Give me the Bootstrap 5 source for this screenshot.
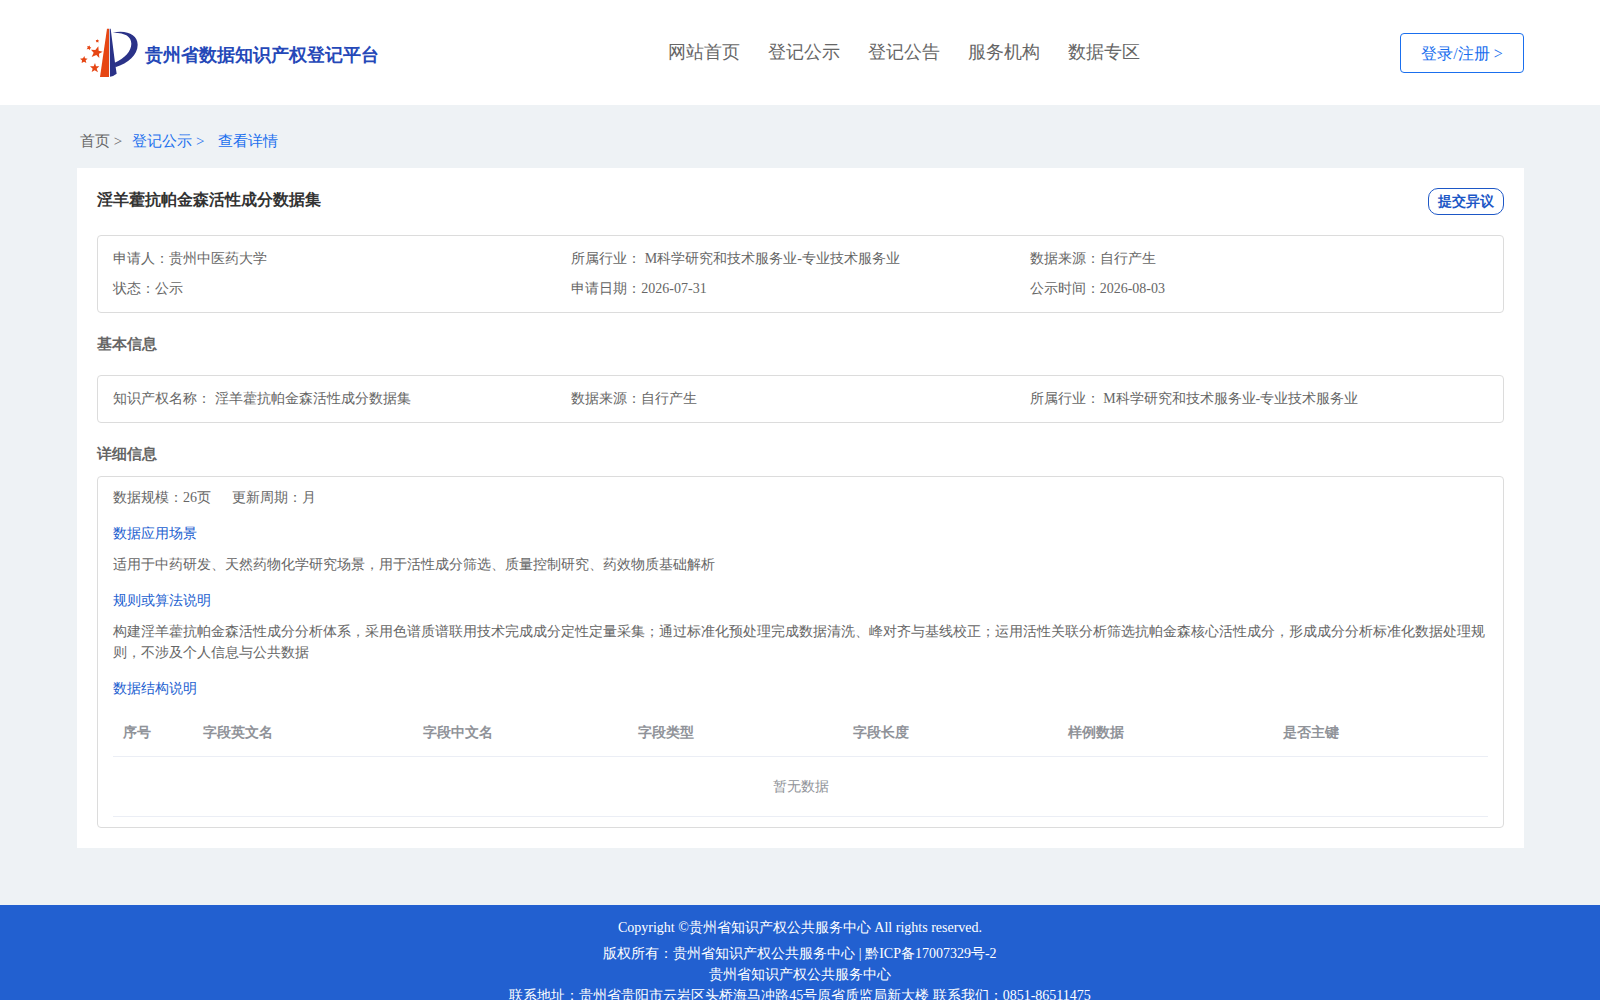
<!DOCTYPE html>
<html lang="en">
<head>
<meta charset="utf-8">
<meta name="viewport" content="width=device-width, initial-scale=1">
<title>贵州省数据知识产权登记平台</title>
<link href="https://cdn.jsdelivr.net/npm/bootstrap@5.3.0/dist/css/bootstrap.min.css" rel="stylesheet">
<style>
  body { font-family: "Liberation Serif", serif; font-size: 14px; line-height: 21px; color: #666; background: #eef2f5; }
  a { text-decoration: none; }
  .page-gutter { padding-left: 77px; padding-right: 76px; }
  .site-header { height: 105px; background: #fff; }
  .site-brand { width: 331px; color: #2548b8; font-size: 18px; font-weight: 700; gap: 7px; padding-left: 3px; }
  .brand-name { padding-top: 5px; }
  .site-nav { gap: 28px; font-size: 18px; padding-bottom: 2px; }
  .site-nav .nav-link { padding: 0; color: #666; line-height: 26px; }
  .login-btn { --bs-btn-color: #1a6fee; --bs-btn-border-color: #1a6fee; --bs-btn-border-radius: 4px; --bs-btn-font-size: 16px; --bs-btn-line-height: 24px; min-width: 124px; padding: 8px 20px 6px; font-family: inherit; }
  .crumbs { font-size: 15px; padding: 25px 3px 16px; line-height: 22px; }
  .crumbs a { color: #666; margin-right: 10px; }
  .crumbs a + a { margin-right: 14px; }
  .crumbs a.crumb-blue, .crumbs .crumb-blue { color: #1a6fee; }
  .detail-panel { background: #fff; padding: 20px; }
  .panel-title { font-size: 16px; line-height: 24px; font-weight: 700; color: #333; margin: 0; }
  .objection-btn { --bs-btn-color: #1d57c6; --bs-btn-border-color: #1d57c6; --bs-btn-border-radius: 10px; --bs-btn-padding-x: 9px; --bs-btn-padding-y: 2px; --bs-btn-font-size: 14px; --bs-btn-line-height: 21px; --bs-btn-font-weight: 700; font-family: inherit; }
  .section-title { font-size: 15px; line-height: 22px; font-weight: 700; color: #666; margin: 0; }
  .detail-title { padding: 20px 0 11px; }
  .info-box { border: 1px solid #dcdcdc; border-radius: 4px; padding: 8px 15px; }
  .info-box .row { --bs-gutter-x: 0; line-height: 30px; }
  .detail-box { padding: 10px 15px; }
  .scale-row { gap: 21px; }
  .sub-title { font-size: 14px; line-height: 21px; color: #2260d0; margin: 15px 0 10px; font-weight: 400; }
  .field-table { --bs-table-color: #909399; --bs-table-bg: transparent; --bs-table-border-color: #ebeef5; --bs-border-color: #ebeef5; color: #909399; table-layout: fixed; margin: 0; border-color: #ebeef5; }
  .field-table th { padding: 13px 10px; font-weight: 700; }
  .field-table td { padding: 19px 10px; }
  .col-index { width: 80px; }
  .col-name { width: 220px; }
  .site-footer { background: #2260d0; color: #fff; margin-top: 57px; padding: 12px 0 20px; }
  .site-footer a { color: #fff; }
  .copyright-line { margin-bottom: 5px; }
</style>
<script src="https://cdn.jsdelivr.net/npm/bootstrap@5.3.0/dist/js/bootstrap.bundle.min.js"></script>
</head>
<body>
<header class="site-header page-gutter d-flex align-items-center justify-content-between">
  <a href="#" class="site-brand d-flex align-items-center">
    <svg width="58" height="50" viewBox="60 55 174 150" aria-hidden="true">
      <path fill="#e64614" d="M141 57h6v145h-27z"/>
      <path fill="#2a3288" d="M149 57h3l13 102 5 33q-10 8-20 9z"/>
      <path fill="#2a3288" d="M158 69C200 60 233 75 233 105c0 30-28 55-67 68l-2-14c30-14 50-34 50-57 0-22-20-34-56-33z"/>
      <g fill="#e64614">
        <path d="M115 110l1 13 12 3-11 6 1 13-9-9-14 6 6-13-8-9 13 1z"/>
        <path d="M105 160l3 10h10l-8 7 4 11-10-6-9 5 3-10-8-7h11z"/>
        <path d="M73 139l2 7 8 1-6 5 2 8-7-4-7 4 1-8-6-5 9-1z"/>
        <path d="M89 107l1 5 4 2-4 3-1 5-3-4-6 1 3-5-1-5 5 1z"/>
        <path d="M112 89l2 3 4 1-3 2v4l-3-2-4 1 1-4-2-3h4z"/>
      </g>
    </svg>
    <span class="brand-name">贵州省数据知识产权登记平台</span>
  </a>
  <nav class="site-nav nav flex-nowrap">
    <a class="nav-link" href="#">网站首页</a>
    <a class="nav-link" href="#">登记公示</a>
    <a class="nav-link" href="#">登记公告</a>
    <a class="nav-link" href="#">服务机构</a>
    <a class="nav-link" href="#">数据专区</a>
  </nav>
  <button type="button" class="btn login-btn">登录/注册 &gt;</button>
</header>

<main class="page-gutter">
  <nav class="crumbs d-flex" aria-label="breadcrumb">
    <a href="#">首页 &gt;</a>
    <a href="#" class="crumb-blue">登记公示 &gt;</a>
    <span class="crumb-blue">查看详情</span>
  </nav>

  <section class="detail-panel">
    <div class="d-flex justify-content-between align-items-start mb-3 pb-1">
      <h1 class="panel-title">淫羊藿抗帕金森活性成分数据集</h1>
      <button type="button" class="btn objection-btn">提交异议</button>
    </div>

    <div class="info-box">
      <div class="row">
        <div class="col-4">申请人：贵州中医药大学</div>
        <div class="col-4">所属行业： M科学研究和技术服务业-专业技术服务业</div>
        <div class="col-4">数据来源：自行产生</div>
        <div class="col-4">状态：公示</div>
        <div class="col-4">申请日期：2026-07-31</div>
        <div class="col-4">公示时间：2026-08-03</div>
      </div>
    </div>

    <h2 class="section-title my-3 py-1">基本信息</h2>
    <div class="info-box">
      <div class="row">
        <div class="col-4">知识产权名称： 淫羊藿抗帕金森活性成分数据集</div>
        <div class="col-4">数据来源：自行产生</div>
        <div class="col-4">所属行业： M科学研究和技术服务业-专业技术服务业</div>
      </div>
    </div>

    <h2 class="section-title detail-title">详细信息</h2>
    <div class="info-box detail-box">
      <div class="scale-row d-flex">
        <span>数据规模：26页</span>
        <span>更新周期：月</span>
      </div>
      <h3 class="sub-title">数据应用场景</h3>
      <div>适用于中药研发、天然药物化学研究场景，用于活性成分筛选、质量控制研究、药效物质基础解析</div>
      <h3 class="sub-title">规则或算法说明</h3>
      <div>构建淫羊藿抗帕金森活性成分分析体系，采用色谱质谱联用技术完成成分定性定量采集；通过标准化预处理完成数据清洗、峰对齐与基线校正；运用活性关联分析筛选抗帕金森核心活性成分，形成成分分析标准化数据处理规则，不涉及个人信息与公共数据</div>
      <h3 class="sub-title">数据结构说明</h3>
      <table class="table field-table">
        <thead>
          <tr>
            <th scope="col" class="col-index">序号</th>
            <th scope="col" class="col-name">字段英文名</th>
            <th scope="col">字段中文名</th>
            <th scope="col">字段类型</th>
            <th scope="col">字段长度</th>
            <th scope="col">样例数据</th>
            <th scope="col">是否主键</th>
          </tr>
        </thead>
        <tbody>
          <tr><td colspan="7" class="text-center">暂无数据</td></tr>
        </tbody>
      </table>
    </div>
  </section>
</main>

<footer class="site-footer text-center">
  <div class="copyright-line">Copyright ©贵州省知识产权公共服务中心 All rights reserved.</div>
  <div>版权所有：贵州省知识产权公共服务中心 | <a href="#">黔ICP备17007329号-2</a></div>
  <div>贵州省知识产权公共服务中心</div>
  <div>联系地址：贵州省贵阳市云岩区头桥海马冲路45号原省质监局新大楼 联系我们：0851-86511475</div>
</footer>
</body>
</html>
